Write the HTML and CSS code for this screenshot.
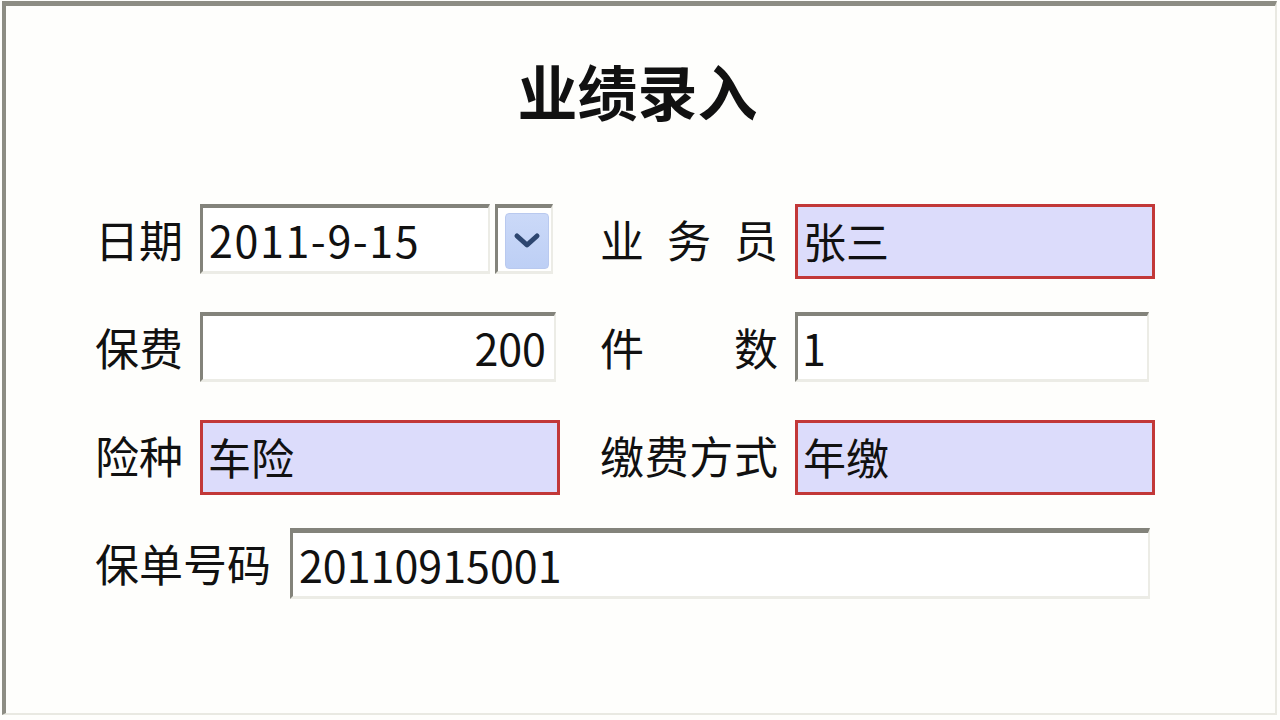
FILE: index.html
```html
<!DOCTYPE html>
<html lang="zh-CN">
<head>
<meta charset="utf-8">
<title>业绩录入</title>
<link rel="stylesheet" href="styles.css">
</head>
<body>
<div class="frame">
  <h1 class="title">业绩录入</h1>
  <div class="form">
    <div class="label">日期</div>
    <div class="field date-field">
      <div class="input gray date-input">2011-9-15</div>
      <div class="drop">
        <div class="drop-btn">
          <svg width="28" height="18" viewBox="0 0 28 18"><path d="M4 4 L14 13 L24 4" fill="none" stroke="#2d4670" stroke-width="5" stroke-linecap="round" stroke-linejoin="round"/></svg>
        </div>
      </div>
    </div>
    <div class="label wide">业务员</div>
    <div class="field"><div class="input red">张三</div></div>

    <div class="label">保费</div>
    <div class="field"><div class="input gray num">200</div></div>
    <div class="label wide">件数</div>
    <div class="field"><div class="input gray g2">1</div></div>

    <div class="label">险种</div>
    <div class="field"><div class="input red">车险</div></div>
    <div class="label wide">缴费方式</div>
    <div class="field"><div class="input red">年缴</div></div>

    <div class="full-row">
      <div class="label">保单号码</div>
      <div class="input gray policy">20110915001</div>
    </div>
  </div>
</div>
</body>
</html>
```

FILE: styles.css
```css
html, body {
  margin: 0;
  padding: 0;
  background: #fefefc;
}

body {
  font-family: "Noto Sans CJK SC", "Noto Sans", sans-serif;
  color: #111;
}

.frame {
  box-sizing: border-box;
  margin: 1px 0 0 2px;
  width: 1275px;
  height: 714px;
  border-top: 5px solid #8d8d84;
  border-left: 4px solid #8d8d84;
  border-right: 2px solid #e9e9e2;
  border-bottom: 2px solid #e9e9e2;
  background: #fefefc;
  padding: 46px 0 0 89px;
}

.title {
  margin: 0 0 0 -89px;
  text-align: center;
  font-size: 60px;
  line-height: 76px;
  font-weight: bold;
  padding-right: 6px;
}

.form {
  margin-top: 76px;
  display: grid;
  grid-template-columns: 105px 400px 195px 360px;
  grid-auto-rows: 75px;
  row-gap: 33px;
  align-items: start;
}

.label {
  font-size: 44px;
  line-height: 70px;
  white-space: nowrap;
}

.label.wide {
  width: 178px;
  text-align: justify;
  text-align-last: justify;
}

.field {
  display: flex;
  align-items: flex-start;
}

.input {
  box-sizing: border-box;
  font-size: 43px;
  line-height: 1;
  display: flex;
  align-items: center;
  white-space: nowrap;
}

.input.gray {
  width: 356px;
  height: 70px;
  background: #ffffff;
  border-top: 4px solid #83837b;
  border-left: 3px solid #83837b;
  border-right: 2px solid #ecece6;
  border-bottom: 3px solid #ecece6;
  padding: 0 6px;
}

.input.g2 {
  width: 354px;
  padding-left: 4px;
}

.input.red {
  width: 360px;
  height: 75px;
  background: #dcdcfb;
  border: 3px solid #c23838;
  padding: 0 6px 2px 5px;
}

.input.num {
  justify-content: flex-end;
  padding-right: 8px;
}

.date-field {
  gap: 5px;
}

.input.date-input {
  width: 290px;
  letter-spacing: 1.6px;
}

.drop {
  box-sizing: border-box;
  width: 58px;
  height: 70px;
  border-top: 4px solid #83837b;
  border-left: 3px solid #83837b;
  border-right: 2px solid #ecece6;
  border-bottom: 3px solid #ecece6;
  background: #fff;
  padding: 5px 1px 2px 7px;
}

.drop-btn {
  box-sizing: border-box;
  width: 44px;
  height: 56px;
  border-radius: 4px;
  border: 1px solid #b9c9ef;
  background: linear-gradient(#cbd9f8, #bdcff5);
  display: flex;
  align-items: center;
  justify-content: center;
}

.full-row {
  grid-column: 1 / -1;
  display: flex;
  align-items: flex-start;
  gap: 19px;
}

.input.policy {
  width: 860px;
  height: 71px;
  border-top-width: 5px;
}
```
